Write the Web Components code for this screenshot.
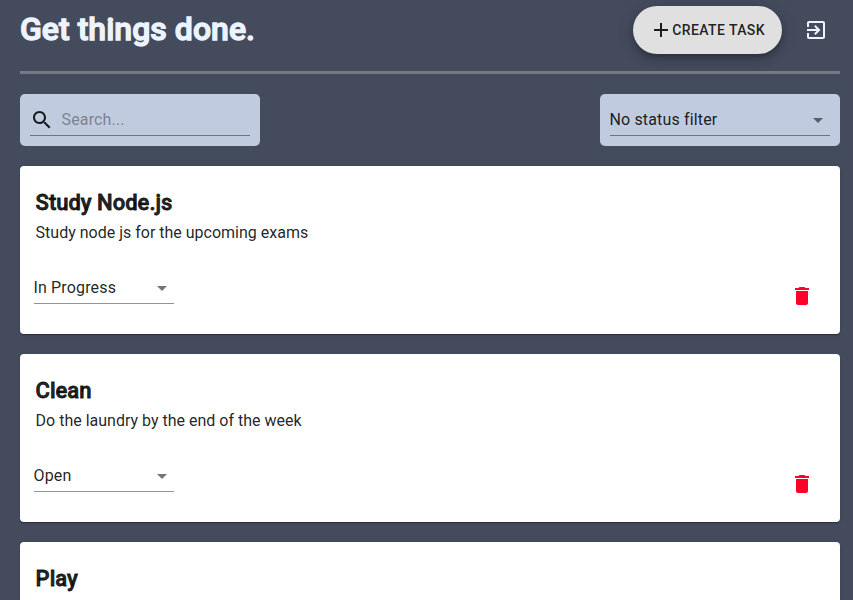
<!DOCTYPE html>
<html lang="en">
<head>
<meta charset="utf-8">
<title>Tasks</title>
<style>
html, body { margin: 0; height: 100%; overflow: hidden; background: #434b5d; }
body { font-family: Roboto, "Liberation Sans", sans-serif; font-size: 16px; color: rgba(0,0,0,.87); -webkit-font-smoothing: antialiased; }
</style>
</head>
<body>
<task-app></task-app>
<script>
const ICONS = {
  add: 'M19 13h-6v6h-2v-6H5v-2h6V5h2v6h6v2z',
  exit: 'M10.09 15.59L11.5 17l5-5-5-5-1.41 1.41L12.67 11H3v2h9.67l-2.58 2.59zM19 3H5c-1.11 0-2 .9-2 2v4h2V5h14v14H5v-4H3v4c0 1.1.89 2 2 2h14c1.1 0 2-.9 2-2V5c0-1.1-.9-2-2-2z',
  search: 'M15.5 14h-.79l-.28-.27C15.41 12.59 16 11.11 16 9.5 16 5.91 13.09 3 9.5 3S3 5.91 3 9.5 5.91 16 9.5 16c1.61 0 3.09-.59 4.23-1.57l.27.28v.79l5 4.99L20.49 19l-4.99-5zm-6 0C7.01 14 5 11.99 5 9.5S7.01 5 9.5 5 14 7.01 14 9.5 11.99 14 9.5 14z',
  arrow: 'M7 10l5 5 5-5z',
  trash: 'M6 19c0 1.1.9 2 2 2h8c1.1 0 2-.9 2-2V7H6v12zM19 4h-3.5l-1-1h-5l-1 1H5v2h14V4z'
};
const define = (name, html) => customElements.define(name, class extends HTMLElement {
  constructor() {
    super();
    this.attachShadow({ mode: 'open' }).innerHTML = html;
  }
});

customElements.define('app-icon', class extends HTMLElement {
  constructor() { super(); this.attachShadow({ mode: 'open' }); }
  connectedCallback() {
    this.shadowRoot.innerHTML = `<style>:host{display:block;width:24px;height:24px;flex:none}svg{display:block;fill:currentColor}</style>
      <svg width="24" height="24" viewBox="0 0 24 24"><path d="${ICONS[this.getAttribute('name')]}"/></svg>`;
  }
});

define('status-select', `<style>
  :host{display:flex;box-sizing:border-box;height:32px;padding-bottom:1px;border-bottom:1px solid rgba(0,0,0,.42);align-items:center;justify-content:space-between}
  span{line-height:19px;margin-left:-.5px}
  app-icon{color:rgba(0,0,0,.54);margin-top:1px}
</style><span><slot></slot></span><app-icon name="arrow"></app-icon>`);

define('search-field', `<style>
  :host{display:flex;box-sizing:border-box;height:32px;padding-bottom:1px;border-bottom:1px solid rgba(0,0,0,.42);align-items:center;gap:7.5px}
  input{flex:1;min-width:0;border:0;padding:0;outline:0;background:none;font:inherit;letter-spacing:inherit;color:inherit;height:19px}
  input::placeholder{color:rgba(0,0,0,.87);opacity:.42}
  app-icon{margin-top:2px}
</style><app-icon name="search"></app-icon><input placeholder="Search...">`);

define('filter-box', `<style>
  :host{display:block;box-sizing:border-box;width:240px;height:52px;padding:10px;border-radius:5px;background:#c0cbe0;letter-spacing:.15px}
</style><slot></slot>`);

define('fab-button', `<style>
  :host{display:block}
  button{display:flex;align-items:center;box-sizing:border-box;width:149px;height:48px;padding:0 16px;border:0;border-radius:24px;background:#e0e0e0;color:rgba(0,0,0,.87);font:500 14px/24px Roboto,sans-serif;letter-spacing:.4px;text-transform:uppercase;white-space:nowrap;box-shadow:0 3px 5px -1px rgba(0,0,0,.2),0 6px 10px rgba(0,0,0,.14),0 1px 18px rgba(0,0,0,.12)}
  span{margin-left:-.8px}
</style><button><app-icon name="add"></app-icon><span><slot></slot></span></button>`);

define('task-card', `<style>
  :host{display:flex;flex:none;flex-direction:column;justify-content:space-between;box-sizing:border-box;height:168px;padding:22px 14px 30px;border-radius:4px;background:#fff;box-shadow:0 2px 1px -1px rgba(0,0,0,.2),0 1px 1px rgba(0,0,0,.14),0 1px 3px rgba(0,0,0,.12)}
  .text{padding:0 1.6px}
  h2{margin:0;font-size:22px;line-height:30px;font-weight:500;letter-spacing:0;-webkit-text-stroke:.8px currentColor}
  p{margin:3px 0 0;line-height:24px}
  .row{display:flex;justify-content:space-between;align-items:flex-end}
  status-select{width:140px;letter-spacing:.15px}
  app-icon{color:#ff0029;margin:0 12px -4px 0}
</style>
<div class="text"><h2><slot name="title"></slot></h2><p><slot name="description"></slot></p></div>
<div class="row"><status-select><slot name="status"></slot></status-select><app-icon name="trash"></app-icon></div>`);

define('task-app', `<style>
  :host{display:flex;flex-direction:column;box-sizing:border-box;height:100vh;overflow:hidden;padding:0 13px 0 20px}
  header{display:flex;flex:none;align-items:center;height:71px;box-sizing:border-box;padding:0 12px 11px 0}
  h1{flex:1;margin:-2px 0 0;font-size:32px;line-height:40px;font-weight:500;color:#edf4ff;letter-spacing:.03px;-webkit-text-stroke:1.3px currentColor}
  header app-icon{color:#edf4ff;margin-left:22px}
  hr{flex:none;width:100%;margin:0;border:0;height:3px;background:#757a87}
  .filters{display:flex;flex:none;justify-content:space-between;padding:20px 0}
  .list{display:flex;flex:1;min-height:0;flex-direction:column;gap:20px}
</style>
<header><h1>Get things done.</h1><fab-button>Create Task</fab-button><app-icon name="exit"></app-icon></header>
<hr>
<div class="filters"><filter-box><search-field></search-field></filter-box><filter-box><status-select>No status filter</status-select></filter-box></div>
<div class="list">
<task-card><span slot="title">Study Node.js</span><span slot="description">Study node js for the upcoming exams</span><span slot="status">In Progress</span></task-card>
<task-card><span slot="title">Clean</span><span slot="description">Do the laundry by the end of the week</span><span slot="status">Open</span></task-card>
<task-card><span slot="title">Play</span></task-card>
</div>`);
</script>
</body>
</html>
